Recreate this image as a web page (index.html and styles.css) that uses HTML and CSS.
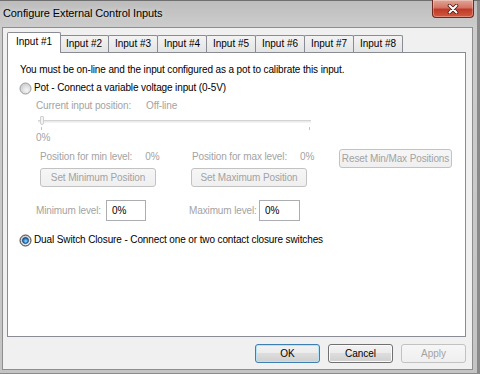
FILE: index.html
```html
<!doctype html>
<html lang="en">
<head>
<meta charset="UTF-8">
<title>Configure External Control Inputs</title>
<link rel="stylesheet" href="styles.css">
</head>
<body>
<div class="window">
  <div class="titlebar">
    <span class="title">Configure External Control Inputs</span>
    <button class="close" title="Close">
      <svg width="12" height="10" viewBox="0 0 12 10">
        <path d="M2.5 1.5 L9.5 8.5 M9.5 1.5 L2.5 8.5" stroke="#4e1a12" stroke-width="3.6" stroke-linecap="round"/>
        <path d="M2.5 1.5 L9.5 8.5 M9.5 1.5 L2.5 8.5" stroke="#fff" stroke-width="2" stroke-linecap="round"/>
      </svg>
    </button>
  </div>

  <div class="dialog">
    <div class="tabs">
      <div class="tab active">Input #1</div>
      <div class="tab">Input #2</div>
      <div class="tab">Input #3</div>
      <div class="tab">Input #4</div>
      <div class="tab">Input #5</div>
      <div class="tab">Input #6</div>
      <div class="tab">Input #7</div>
      <div class="tab">Input #8</div>
    </div>

    <div class="panel">
      <p class="intro">You must be on-line and the input configured as a pot to calibrate this input.</p>

      <label class="radio">
        <svg width="13" height="13" viewBox="0 0 13 13">
          <defs>
            <radialGradient id="off" cx="60%" cy="65%" r="70%">
              <stop offset="0" stop-color="#f6f6f6"/>
              <stop offset="1" stop-color="#c6c8cb"/>
            </radialGradient>
          </defs>
          <circle cx="6.5" cy="6.5" r="5.5" fill="url(#off)" stroke="#9c9c9c"/>
        </svg>
        Pot - Connect a variable voltage input (0-5V)
      </label>

      <div class="row dim indent current">
        <span class="current-label">Current input position:</span>
        <span>Off-line</span>
      </div>

      <div class="slider">
        <div class="track"></div>
        <div class="thumb"></div>
        <div class="ticks"><span></span><span></span></div>
      </div>

      <div class="row dim indent">0%</div>

      <div class="positions">
        <div class="pos-group min">
          <div class="row dim">Position for min level:<span class="val">0%</span></div>
          <button class="btn set" disabled>Set Minimum Position</button>
        </div>
        <div class="pos-group max">
          <div class="row dim">Position for max level:<span class="val">0%</span></div>
          <button class="btn set" disabled>Set Maximum Position</button>
        </div>
        <button class="btn reset" disabled>Reset Min/Max Positions</button>
      </div>

      <div class="levels">
        <span class="dim lvl-label">Minimum level:</span>
        <input class="lvl" type="text" value="0%" readonly>
        <span class="dim lvl-label second">Maximum level:</span>
        <input class="lvl wide" type="text" value="0%" readonly>
      </div>

      <label class="radio dual">
        <svg width="13" height="13" viewBox="0 0 13 13">
          <defs>
            <radialGradient id="on-ring" cx="60%" cy="65%" r="70%">
              <stop offset="0" stop-color="#f4f4f4"/>
              <stop offset="1" stop-color="#c2c4c8"/>
            </radialGradient>
            <radialGradient id="on-dot" cx="55%" cy="60%" r="60%">
              <stop offset="0" stop-color="#9fe0ff"/>
              <stop offset="0.5" stop-color="#3b95d8"/>
              <stop offset="1" stop-color="#174f8f"/>
            </radialGradient>
          </defs>
          <circle cx="6.5" cy="6.5" r="5.5" fill="url(#on-ring)" stroke="#3f3f3f"/>
          <circle cx="6.5" cy="6.5" r="3" fill="url(#on-dot)" stroke="#123e70" stroke-width="0.8"/>
        </svg>
        Dual Switch Closure - Connect one or two contact closure switches
      </label>
    </div>

    <div class="actions">
      <button class="btn default">OK</button>
      <button class="btn">Cancel</button>
      <button class="btn" disabled>Apply</button>
    </div>
  </div>
</div>
</body>
</html>
```

FILE: styles.css
```css
* { box-sizing: border-box; }
body { margin: 0; font-family: "Liberation Sans", Arial, sans-serif; font-size: 10px; color: #000; }

/* window frame */
.window { width: 480px; height: 374px; display: flex; flex-direction: column; background: linear-gradient(#bcbcbc, #cdcdcd 28px, #c4c4c4); box-shadow: inset 0 1px 0 #6f6f6f, inset -3px -1px 0 #8a8a8a; }
.titlebar { height: 27px; flex: none; display: flex; justify-content: space-between; align-items: flex-start; padding-left: 3px; }
.title { font-size: 11px; line-height: 27px; letter-spacing: -0.1px; text-shadow: 0 0 5px #ececec; }
.close { width: 42px; height: 18px; margin-right: 6px; padding: 0; border: 1px solid #6e2a20; border-top: none; border-radius: 0 0 4px 4px; background: linear-gradient(#e3a597, #d27464 45%, #bf3b27 55%, #d25a3f); box-shadow: inset 0 0 0 1px rgba(255, 255, 255, .3); display: flex; align-items: center; justify-content: center; }

/* dialog body */
.dialog { flex: 1; margin: 0 7px 4px 2px; padding: 4px 6px 6px 4px; background: #f0f0f0; border: 1px solid #8e8e8e; display: flex; flex-direction: column; }

.tabs { display: flex; height: 21px; position: relative; z-index: 1; }
.tab { width: 50px; height: 17px; margin-top: 3px; margin-left: -1px; border: 1px solid #898c95; border-bottom: none; border-radius: 2px 2px 0 0; background: linear-gradient(#f3f3f3, #e4e4e4); text-align: center; line-height: 16px; }
.tab.active { width: 54px; height: 21px; margin-top: 0; margin-left: 0; margin-right: -1px; background: #fff; line-height: 18px; position: relative; z-index: 2; }

.panel { flex: 1; margin-top: -1px; padding: 10px 12px 0; background: #fff; border: 1px solid #898c95; display: flex; flex-direction: column; align-items: flex-start; letter-spacing: -0.12px; }
.intro { margin: 0; line-height: 14px; }
.row { line-height: 14px; }
.dim { color: #a3a3a3; }
.indent { margin-left: 16px; }

.radio { display: flex; align-items: center; gap: 2px; line-height: 14px; margin-top: 4px; margin-left: -1px; }
.radio.dual { margin-top: 12px; }

.current { margin-top: 4px; display: flex; }
.current-label { width: 110px; }

.slider { margin-left: 18px; width: 273px; height: 18px; position: relative; }
.track { margin-top: 7px; height: 3px; background: #e9eaea; border-top: 1px solid #d3d3d3; border-bottom: 1px solid #f4f4f4; }
.thumb { position: absolute; left: 2px; top: 3px; width: 4px; height: 9px; background: #f4f4f4; border: 1px solid #cfcfcf; border-radius: 1px 1px 2px 2px; }
.ticks { display: flex; justify-content: space-between; margin-top: 4px; padding: 0 1px 0 3px; }
.ticks span { width: 1px; height: 3px; background: #c4c4c4; }

.positions { display: flex; align-items: flex-start; margin-top: 4px; margin-left: 20px; }
.pos-group { padding-top: 1px; display: flex; flex-direction: column; align-items: flex-start; }
.pos-group.min { width: 151px; }
.pos-group.max { width: 148px; }
.pos-group.max .row { padding-left: 1px; }
.val { margin-left: 13px; }

.btn { font: inherit; letter-spacing: inherit; color: #000; height: 19px; padding: 0; border: 1px solid #707070; border-radius: 3px; background: linear-gradient(#f2f2f2, #ebebeb 50%, #dddddd 50%, #cfcfcf); box-shadow: inset 0 0 0 1px #fbfbfb; }
.btn:disabled { color: #a3a3a3; border-color: #c2c2c2; background: linear-gradient(#f6f6f6, #efefef); box-shadow: none; }
.btn.set { width: 116px; margin-top: 4px; }
.btn.reset { width: 113px; }
.btn.default { border-color: #3c7fb1; box-shadow: inset 0 0 0 1px #b7e2f8; }

.levels { display: flex; align-items: center; margin-top: 13px; margin-left: 16px; }
.lvl-label { width: 70px; }
.lvl { font: inherit; color: #000; width: 40px; height: 21px; padding: 0 0 0 5px; border: 1px solid #abadb3; background: #fff; outline: none; }
.lvl.wide { width: 41px; }
.lvl-label.second { margin-left: 43px; }

.actions { display: flex; justify-content: flex-end; gap: 8px; margin-top: 7px; }
.actions .btn { width: 65px; }
```
